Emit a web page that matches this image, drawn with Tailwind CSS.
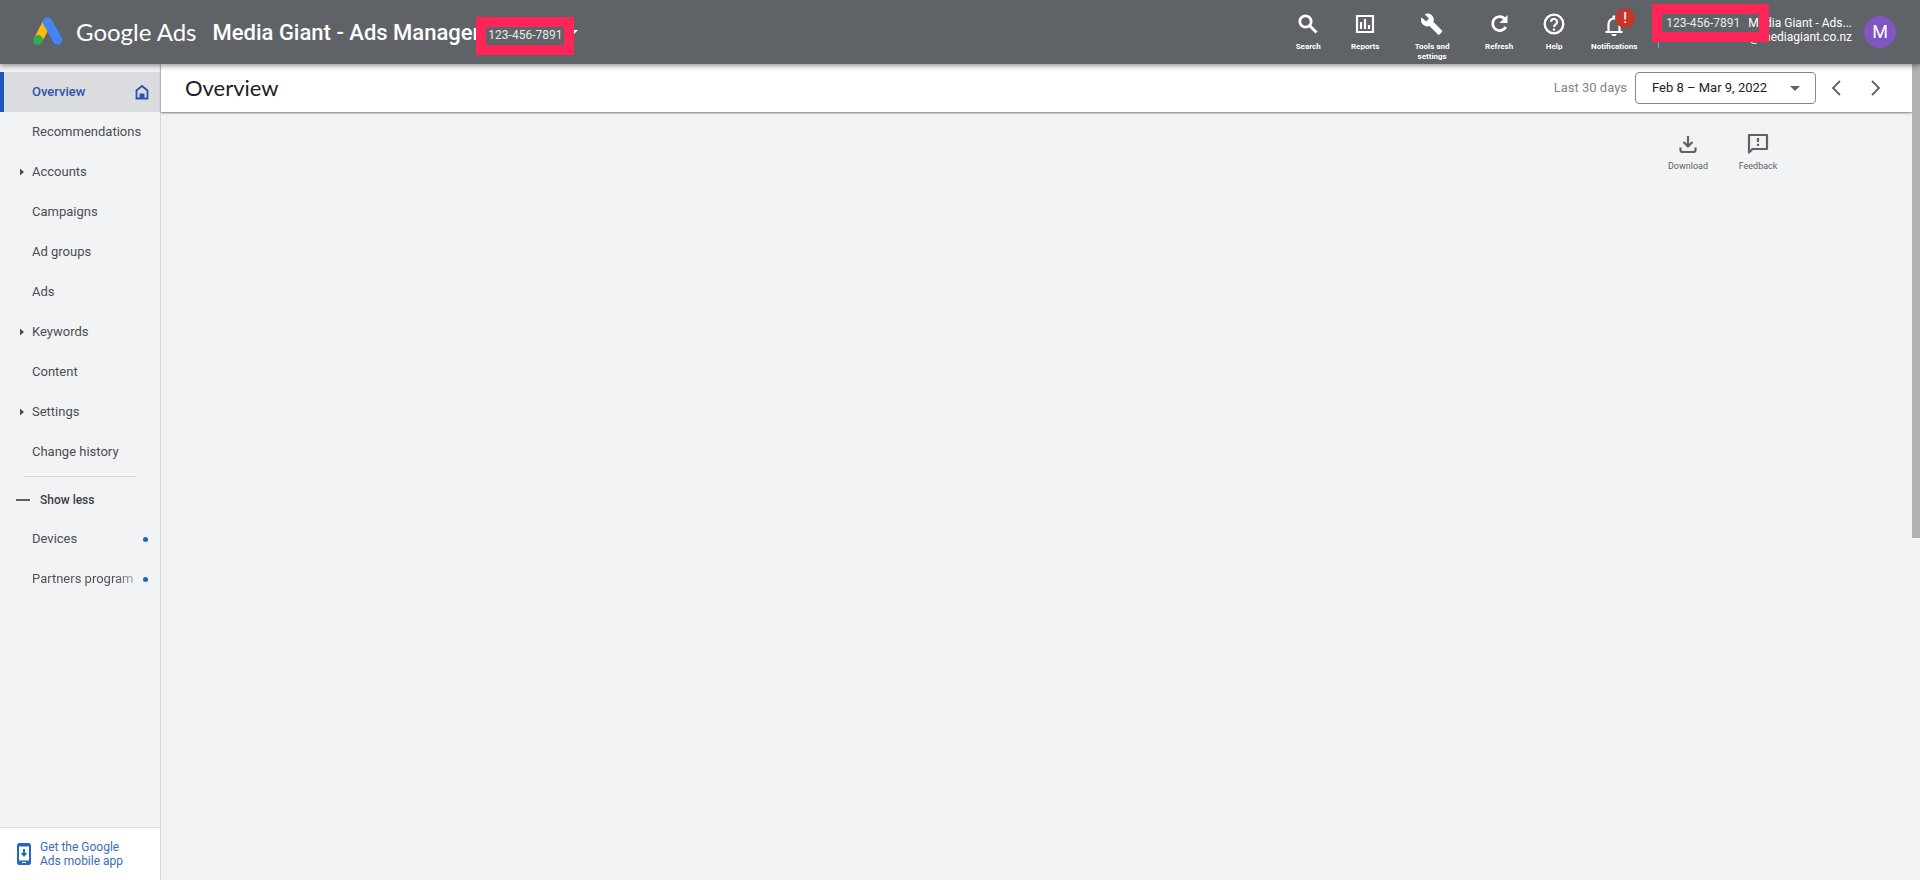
<!DOCTYPE html>
<html lang="en">
<head>
<meta charset="utf-8">
<meta name="viewport" content="width=device-width, initial-scale=1">
<title>Overview - Google Ads</title>
<script src="https://cdn.jsdelivr.net/npm/@tailwindcss/browser@4"></script>
</head>
<body class="flex min-h-screen flex-col bg-[#f1f3f5] font-[Roboto,sans-serif] text-[#4b4e52]">

<header class="relative z-10 flex h-16 items-center bg-[#5f6368] pl-8 pr-6 text-white shadow-[0_2px_5px_rgba(0,0,0,0.4)]">
  <a href="#" class="flex items-center gap-3 font-[Lato,sans-serif] text-2xl">
    <svg class="h-8 w-8" viewBox="0 0 32 32" aria-hidden="true">
      <path d="M15.500 6 L6 24" stroke="#fbbc04" stroke-width="9" fill="none"/>
      <path d="M15.500 6 L25.500 24" stroke="#4285f4" stroke-width="9.500" stroke-linecap="round" fill="none"/>
      <circle cx="6" cy="24" r="5" fill="#34a853"/>
    </svg>
    <span>Google Ads</span>
  </a>
  <button class="ml-4 flex items-center gap-2">
    <span class="text-[22px] font-medium">Media Giant - Ads Manager</span>
    <span class="relative pt-1.5 text-xs text-[#e8eaed]">123-456-7891
      <span class="absolute -inset-x-3 -top-1 -bottom-3 border-10 border-[#ff2557]"></span>
    </span>
    <svg class="h-2 w-2" viewBox="0 0 8 8" aria-hidden="true"><path d="M0 2h8L4 6z" fill="#fff"/></svg>
  </button>

  <nav class="ml-auto flex h-full items-start pt-3 text-[8px] leading-[10px] font-bold" aria-label="Tools">
    <button class="flex w-14 flex-col items-center gap-1.5">
      <svg class="h-6 w-6" viewBox="0 0 24 24" fill="none" stroke="#fff" stroke-width="2.800" aria-hidden="true"><circle cx="9.500" cy="9.500" r="5.700"/><path d="M13.500 13.500l7 7"/></svg>
      Search
    </button>
    <button class="flex w-[58px] flex-col items-center gap-1.5">
      <svg class="h-6 w-6" viewBox="0 0 24 24" fill="none" stroke="#fff" stroke-width="2.200" aria-hidden="true"><path d="M4 4h16v16H4z"/><path d="M8 17v-7M12 17V7M16 17v-4"/></svg>
      Reports
    </button>
    <button class="flex w-[76px] flex-col items-center gap-1.5">
      <svg class="h-6 w-6" viewBox="0 0 24 24" fill="#fff" aria-hidden="true"><path d="M22 18.500l-8.600-8.600c.9-2.200.4-4.600-1.400-6.400-2-2-4.900-2.400-7.300-1.300l4.300 4.300-3 3-4.400-4.300c-1.200 2.400-.7 5.400 1.300 7.400 1.800 1.800 4.300 2.300 6.500 1.400l8.600 8.600c.4.4 1 .4 1.400 0l2.600-2.700c.4-.4.4-1 0-1.400z"/></svg>
      <span>Tools and<br>settings</span>
    </button>
    <button class="flex w-[58px] flex-col items-center gap-1.5">
      <svg class="h-6 w-6" viewBox="0 0 24 24" aria-hidden="true"><path d="M17.500 6.500A7 7 0 1 0 18.800 15" fill="none" stroke="#fff" stroke-width="2.800"/><path d="M20.500 3v8h-8z" fill="#fff"/></svg>
      Refresh
    </button>
    <button class="flex w-[52px] flex-col items-center gap-1.5">
      <svg class="h-6 w-6" viewBox="0 0 24 24" aria-hidden="true"><circle cx="12" cy="12" r="9.300" fill="none" stroke="#fff" stroke-width="2.300"/><path d="M9 9.800a3 3 0 1 1 4.800 2.400c-1.200.9-1.800 1.300-1.800 2.800" fill="none" stroke="#fff" stroke-width="2.200"/><path d="M10.900 16.500h2.200v2.200h-2.200z" fill="#fff"/></svg>
      Help
    </button>
    <button class="relative flex w-[68px] flex-col items-center gap-1.5">
      <svg class="h-6 w-6" viewBox="0 0 24 24" aria-hidden="true"><path d="M6.500 20v-8a5.500 5.500 0 0 1 11 0V20M3.500 20h17" fill="none" stroke="#fff" stroke-width="2.200"/><path d="M10.500 3.500h3v3h-3zM9.500 22h5a2.500 2.500 0 0 1-5 0z" fill="#fff"/></svg>
      Notifications
      <span class="absolute -top-1 left-[35px] flex h-5 w-5 items-center justify-center rounded-full bg-[#c5352b] text-sm font-medium">!</span>
    </button>
  </nav>

  <div class="relative ml-2.5 flex h-full items-center gap-3 text-xs">
    <span class="absolute bottom-4 left-0 h-8 w-px bg-[#9a9da1]"></span>
    <div class="ml-2 pb-1 text-right leading-[14px] whitespace-nowrap">
      <div><span class="mr-2 text-[#e8eaed]">123-456-7891</span>Media Giant - Ads...</div>
      <div>@mediagiant.co.nz</div>
    </div>
    <span class="absolute top-1 -left-1.5 h-[38px] w-[117px] border-10 border-[#ff2557]"></span>
    <button class="h-8 w-8 rounded-full bg-[#7e57c2] text-lg" aria-label="Account">M</button>
  </div>
</header>

<div class="flex flex-1">
  <aside class="flex w-[161px] shrink-0 flex-col border-r border-[#d5d8db] pt-2 text-[13px]">
    <nav aria-label="Pages">
      <a href="#" class="flex h-10 items-center justify-between border-l-4 border-[#1a56bd] bg-[#dadce0] pr-2.5 pl-7 font-medium text-[#2f55ad]">Overview
        <svg class="h-4 w-4" viewBox="0 0 16 16" aria-hidden="true"><path d="M2.500 6.500L8 2l5.500 4.500v8h-11z" fill="none" stroke="#2c51ad" stroke-width="1.800"/><path d="M5.500 14.500V9.500h5v5z" fill="#2c51ad"/></svg>
      </a>
      <a href="#" class="flex h-10 items-center pl-8">Recommendations</a>
      <a href="#" class="flex h-10 items-center gap-2 pl-5"><svg class="h-2 w-1" viewBox="0 0 4 8" aria-hidden="true"><path d="M0 0.500v7L4 4z" fill="#4b4e52"/></svg>Accounts</a>
      <a href="#" class="flex h-10 items-center pl-8">Campaigns</a>
      <a href="#" class="flex h-10 items-center pl-8">Ad groups</a>
      <a href="#" class="flex h-10 items-center pl-8">Ads</a>
      <a href="#" class="flex h-10 items-center gap-2 pl-5"><svg class="h-2 w-1" viewBox="0 0 4 8" aria-hidden="true"><path d="M0 0.500v7L4 4z" fill="#4b4e52"/></svg>Keywords</a>
      <a href="#" class="flex h-10 items-center pl-8">Content</a>
      <a href="#" class="flex h-10 items-center gap-2 pl-5"><svg class="h-2 w-1" viewBox="0 0 4 8" aria-hidden="true"><path d="M0 0.500v7L4 4z" fill="#4b4e52"/></svg>Settings</a>
      <a href="#" class="flex h-10 items-center pl-8">Change history</a>
      <hr class="mt-1 mr-6 ml-6 border-[#d5d8db]">
      <button class="mt-1 flex h-[38px] w-full items-center gap-2.5 pl-4 text-xs font-medium text-[#3c4043]"><svg class="h-0.5 w-3.5" viewBox="0 0 14 2" aria-hidden="true"><path d="M0 0h14v2H0z" fill="#5f6368"/></svg>Show less</button>
      <a href="#" class="flex h-10 items-center justify-between pr-3 pl-8">Devices<span class="h-[5px] w-[5px] rounded-full bg-[#1a6bc9]"></span></a>
      <a href="#" class="flex h-10 items-center justify-between pr-3 pl-8"><span class="bg-linear-to-r from-[#4b4e52] from-80% to-[#a6a9ac] bg-clip-text text-transparent">Partners program</span><span class="h-[5px] w-[5px] rounded-full bg-[#1a6bc9]"></span></a>
    </nav>
    <a href="#" class="mt-auto flex h-[53px] items-center gap-2 border-t border-[#dadce0] bg-white pl-4 text-xs leading-[14px] text-[#3a6db5]">
      <svg class="h-6 w-4 shrink-0" viewBox="0 0 16 24" aria-hidden="true"><rect x="1" y="1" width="14" height="22" rx="2.500" fill="#2468c0"/><path d="M3 4.500h10v14H3z" fill="#fff"/><path d="M7 7h2v4h2.500L8 15l-3.500-4H7z" fill="#2468c0"/><path d="M6 20.500h4" stroke="#fff"/></svg>
      <span>Get the Google<br>Ads mobile app</span>
    </a>
  </aside>

  <main class="min-w-0 flex-1">
    <div class="flex h-12 items-center bg-white pr-6 pl-6 shadow-[0_1px_2px_rgba(0,0,0,0.5)]">
      <h1 class="pb-0.5 font-[Lato,sans-serif] text-[22px] text-[#202124]">Overview</h1>
      <label for="range" class="ml-auto text-[13px] text-[#80868b]">Last 30 days</label>
      <div class="relative ml-2">
        <select id="range" class="block h-8 w-[181px] appearance-none rounded border border-[#80868b] bg-white px-4 text-[13px] text-[#202124]"><option>Feb 8 – Mar 9, 2022</option></select>
        <svg class="pointer-events-none absolute top-3.5 right-4 h-[5px] w-2.5" viewBox="0 0 10 5" aria-hidden="true"><path d="M0 0h10L5 5z" fill="#5f6368"/></svg>
      </div>
      <button class="ml-2 flex h-8 w-6 items-center justify-center" aria-label="Previous period"><svg class="h-4 w-2.5" viewBox="0 0 10 16" aria-hidden="true"><path d="M9 1L2 8l7 7" fill="none" stroke="#5f6368" stroke-width="1.800"/></svg></button>
      <button class="ml-4 flex h-8 w-6 items-center justify-center" aria-label="Next period"><svg class="h-4 w-2.5" viewBox="0 0 10 16" aria-hidden="true"><path d="M1 1l7 7-7 7" fill="none" stroke="#5f6368" stroke-width="1.800"/></svg></button>
    </div>
    <div class="flex justify-end pt-5 pr-[119px] text-[9px] leading-3 text-[#5f6368]">
      <button class="flex w-[70px] flex-col items-center gap-1"><svg class="h-6 w-6" viewBox="0 0 24 24" fill="none" stroke="#5f6368" stroke-width="2.200" aria-hidden="true"><path d="M12 4v10M7.500 10l4.500 4.500 4.500-4.500"/><path d="M4.500 15.500v2.500q0 2 2 2h11q2 0 2-2v-2.500"/></svg>Download</button>
      <button class="flex w-[70px] flex-col items-center gap-1"><svg class="h-6 w-6" viewBox="0 0 24 24" fill="none" stroke="#5f6368" stroke-width="2.200" aria-hidden="true"><path d="M3 20.500V3h18v14H6.500z" stroke-linejoin="round"/><path d="M12 6v4M12 11.800v2.200"/></svg>Feedback</button>
    </div>
  </main>

  <div class="w-2 shrink-0" aria-hidden="true"><div class="h-[474px] bg-[#b0b1b3]"></div></div>
</div>
</body>
</html>
